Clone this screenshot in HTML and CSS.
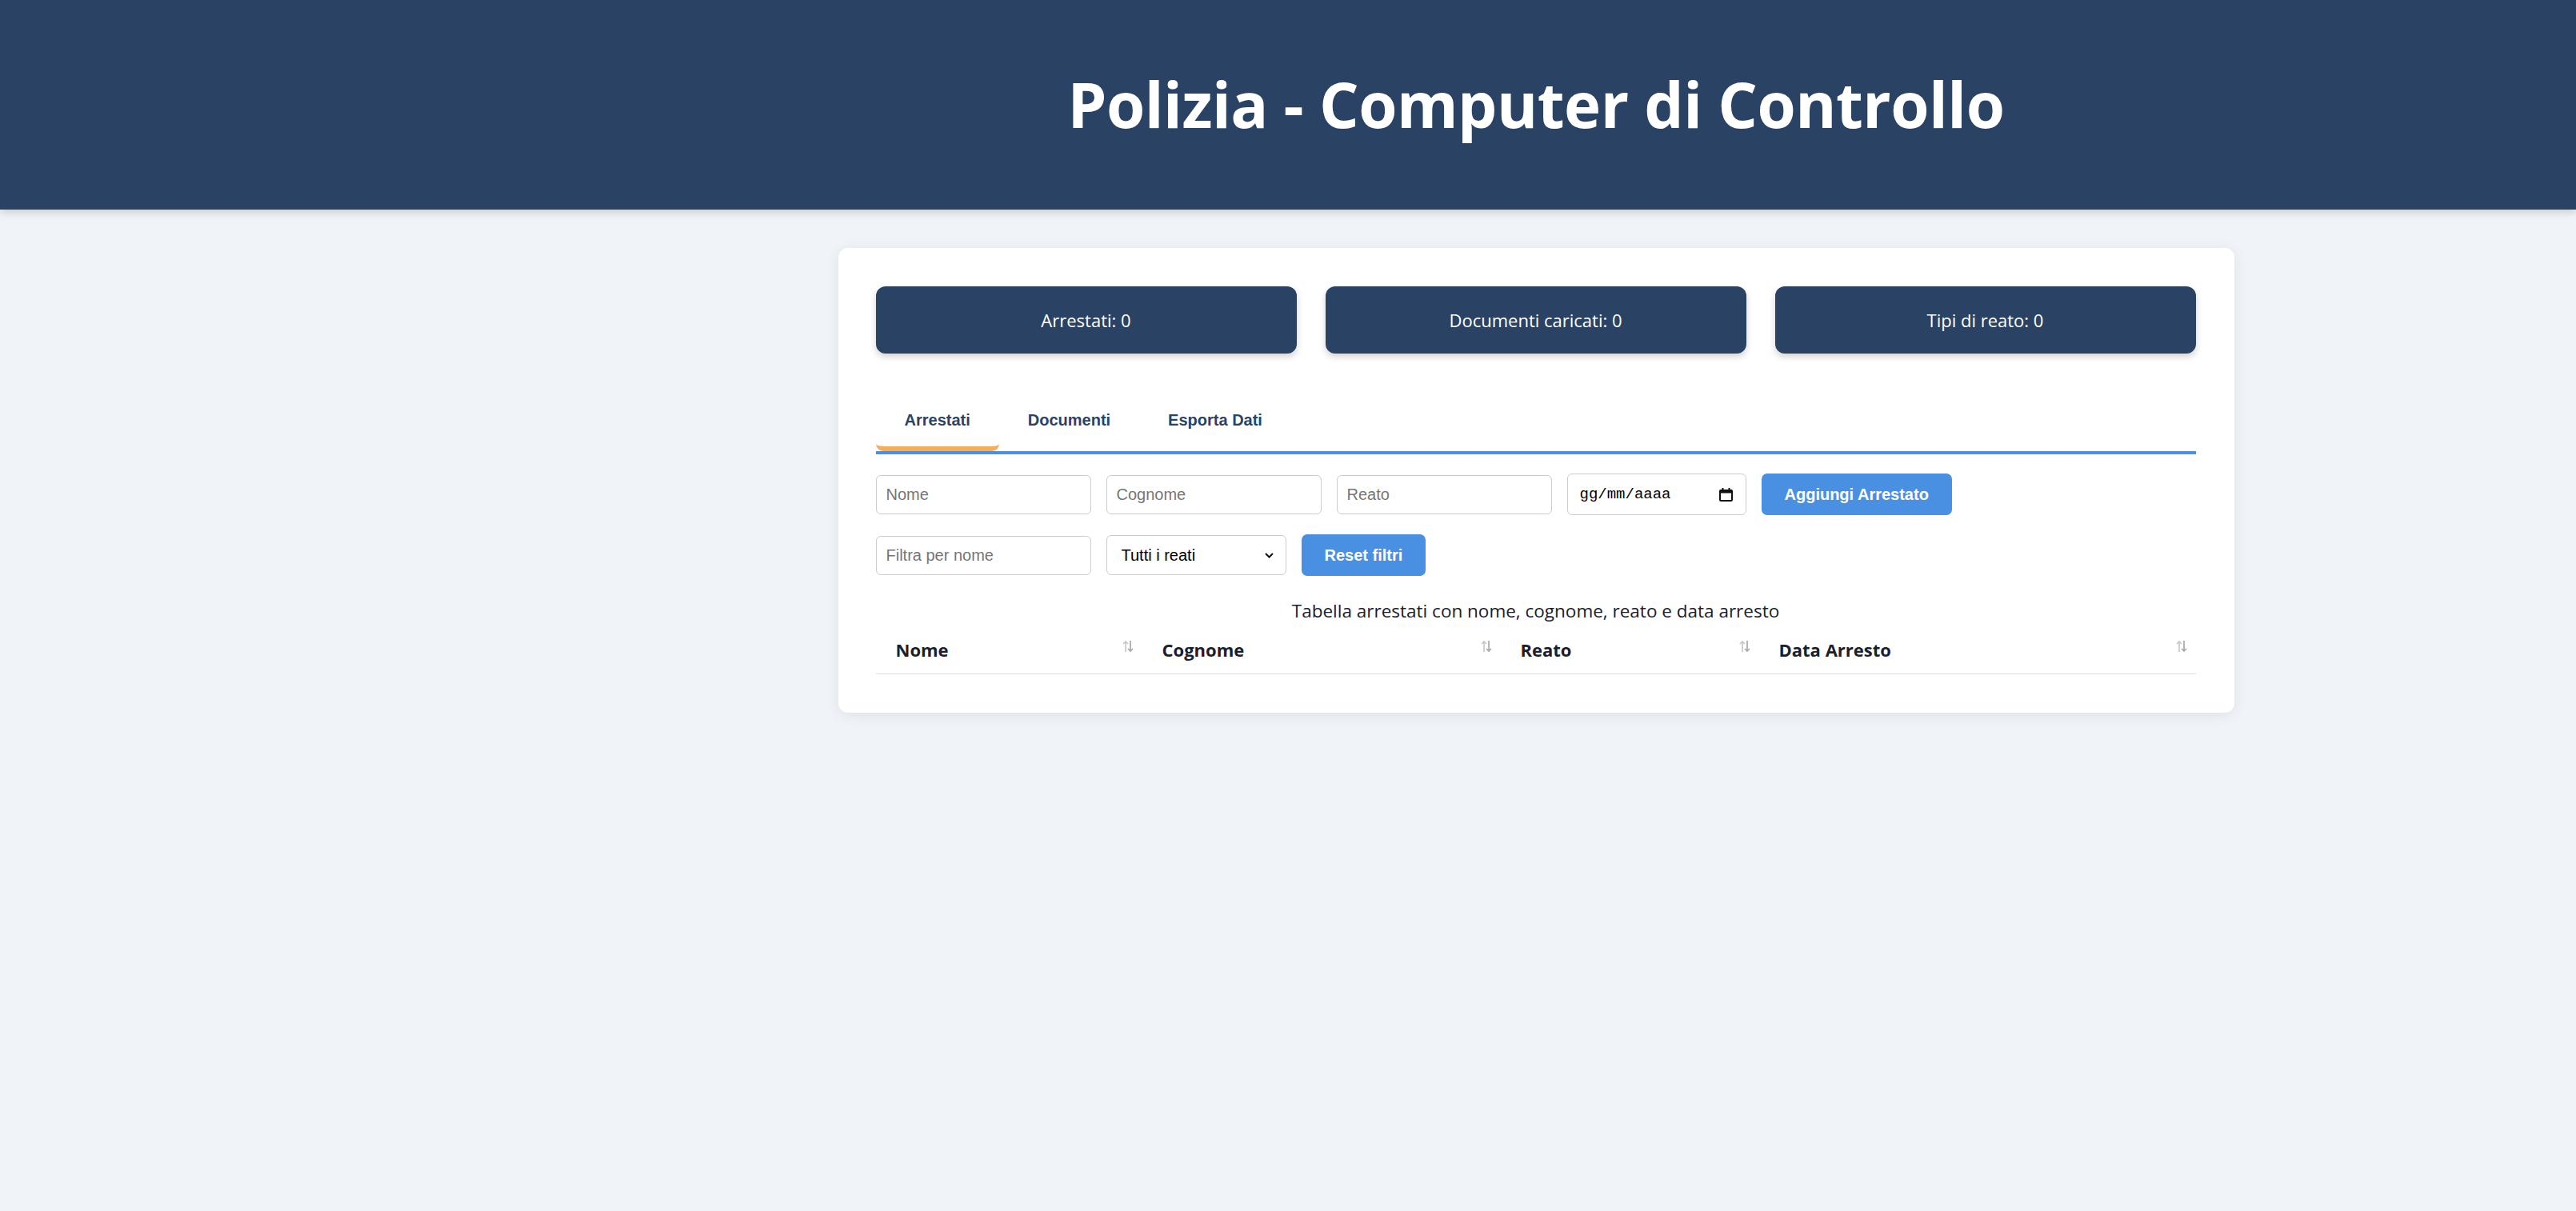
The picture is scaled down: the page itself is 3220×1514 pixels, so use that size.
FILE: index.html
```html
<!DOCTYPE html>
<html lang="it">
<head>
<meta charset="utf-8">
<title>Polizia - Computer di Controllo</title>
<link rel="stylesheet" href="styles.css">
</head>
<body>
<header class="site-header">
  <h1 class="site-title">Polizia - Computer di Controllo</h1>
</header>
<main class="main">
  <section class="card">
    <div class="stats">
      <div class="stat">Arrestati: 0</div>
      <div class="stat">Documenti caricati: 0</div>
      <div class="stat">Tipi di reato: 0</div>
    </div>

    <nav class="tabs">
      <button class="tab active" type="button">Arrestati</button>
      <button class="tab" type="button">Documenti</button>
      <button class="tab" type="button">Esporta Dati</button>
    </nav>

    <div class="form-row first">
      <input class="field" type="text" placeholder="Nome">
      <input class="field" type="text" placeholder="Cognome">
      <input class="field" type="text" placeholder="Reato">
      <div class="date-field">
        <span class="date-text">gg/mm/aaaa</span>
        <svg class="cal-icon" width="17" height="18" viewBox="0 0 17 18" aria-hidden="true">
          <rect x="1" y="4" width="15" height="13" rx="1" fill="none" stroke="#111" stroke-width="2"/>
          <rect x="1" y="3.5" width="15" height="4" fill="#111"/>
          <rect x="3.5" y="1" width="2" height="3" fill="#111"/>
          <rect x="11.5" y="1" width="2" height="3" fill="#111"/>
        </svg>
      </div>
      <button class="btn" type="button">Aggiungi Arrestato</button>
    </div>

    <div class="form-row">
      <input class="field" type="text" placeholder="Filtra per nome">
      <div class="select-wrap">
        <select class="select">
          <option>Tutti i reati</option>
        </select>
        <svg class="chevron" width="11" height="7" viewBox="0 0 11 7" aria-hidden="true">
          <path d="M1 1l4.5 4.5L10 1" fill="none" stroke="#111" stroke-width="2"/>
        </svg>
      </div>
      <button class="btn" type="button">Reset filtri</button>
    </div>

    <table class="table">
      <caption class="table-caption">Tabella arrestati con nome, cognome, reato e data arresto</caption>
      <thead>
        <tr>
          <th class="col-nome">Nome<svg class="sort" width="14" height="16" viewBox="0 0 14 16" aria-hidden="true"><path d="M4 15V2M1 5l3-3 3 3" fill="none" stroke="#c8c8c8" stroke-width="1.7"/><path d="M10 1v13M7 11l3 3 3-3" fill="none" stroke="#a9a9a9" stroke-width="1.7"/></svg></th>
          <th class="col-cognome">Cognome<svg class="sort" width="14" height="16" viewBox="0 0 14 16" aria-hidden="true"><path d="M4 15V2M1 5l3-3 3 3" fill="none" stroke="#c8c8c8" stroke-width="1.7"/><path d="M10 1v13M7 11l3 3 3-3" fill="none" stroke="#a9a9a9" stroke-width="1.7"/></svg></th>
          <th class="col-reato">Reato<svg class="sort" width="14" height="16" viewBox="0 0 14 16" aria-hidden="true"><path d="M4 15V2M1 5l3-3 3 3" fill="none" stroke="#c8c8c8" stroke-width="1.7"/><path d="M10 1v13M7 11l3 3 3-3" fill="none" stroke="#a9a9a9" stroke-width="1.7"/></svg></th>
          <th class="col-data">Data Arresto<svg class="sort" width="14" height="16" viewBox="0 0 14 16" aria-hidden="true"><path d="M4 15V2M1 5l3-3 3 3" fill="none" stroke="#c8c8c8" stroke-width="1.7"/><path d="M10 1v13M7 11l3 3 3-3" fill="none" stroke="#a9a9a9" stroke-width="1.7"/></svg></th>
        </tr>
      </thead>
      <tbody></tbody>
    </table>
  </section>
</main>
</body>
</html>
```

FILE: styles.css
```css
* { box-sizing: border-box; }

html, body {
  margin: 0;
  padding: 0;
}

body {
  background: #f0f4f8;
  font-family: "Open Sans", "Noto Sans", sans-serif;
  color: #1a202c;
  min-height: 1514px;
  overflow: hidden;
}

.site-header {
  background: #2a4365;
  height: 262px;
  display: flex;
  align-items: center;
  justify-content: center;
  padding-left: 620px;
  box-shadow: 0 3px 10px rgba(0, 0, 0, 0.18);
  position: relative;
  z-index: 1;
}

.site-title {
  margin: 0;
  color: #ffffff;
  font-family: "Open Sans", "Noto Sans", sans-serif;
  font-weight: 700;
  font-size: 78px;
  line-height: 1.2;
  letter-spacing: -0.5px;
}

.main {
  padding-left: 620px;
  padding-top: 48px;
}

.card {
  width: 1745px;
  margin: 0 auto;
  background: #ffffff;
  border-radius: 12px;
  padding: 48px 48px 48px 47px;
  box-shadow: 0 3px 18px rgba(0, 0, 0, 0.08);
}

.stats {
  display: grid;
  grid-template-columns: repeat(3, 1fr);
  gap: 36px;
  margin-bottom: 48px;
}

.stat {
  background: #2a4365;
  color: #ffffff;
  border-radius: 12px;
  padding: 24px;
  text-align: center;
  font-size: 22px;
  line-height: 36px;
  box-shadow: 0 4px 9px rgba(0, 0, 0, 0.18);
}

.tabs {
  display: flex;
  border-bottom: 4px solid #4a90e2;
}

.tab {
  background: none;
  border: none;
  border-bottom: 6px solid transparent;
  border-radius: 9px;
  padding: 24px 36px 21px;
  font-family: "Liberation Sans", Arial, sans-serif;
  font-weight: 700;
  font-size: 20px;
  line-height: 23px;
  color: #2a4365;
  cursor: pointer;
}

.tab.active {
  border-bottom-color: #f6ad55;
}

.form-row {
  display: flex;
  align-items: center;
  gap: 19px;
  margin-top: 24px;
}

.field {
  width: 269px;
  height: 49px;
  padding: 0 12px;
  border: 1px solid #cccccc;
  border-radius: 6px;
  font-family: "Liberation Sans", Arial, sans-serif;
  font-size: 20px;
  color: #111;
  background: #fff;
}

.field::placeholder {
  color: #767676;
}

.date-field {
  width: 224px;
  height: 52px;
  border: 1px solid #cccccc;
  border-radius: 6px;
  display: flex;
  align-items: center;
  justify-content: space-between;
  padding: 0 16px 0 15px;
  background: #fff;
}

.date-text {
  font-family: "Liberation Mono", "DejaVu Sans Mono", monospace;
  font-size: 19px;
  color: #000;
}

.cal-icon {
  display: block;
}

.btn {
  height: 52px;
  padding: 0 29px;
  border: none;
  border-radius: 7px;
  background: #4a90e2;
  color: #ffffff;
  font-family: "Liberation Sans", Arial, sans-serif;
  font-weight: 700;
  font-size: 20px;
  cursor: pointer;
}

.select-wrap {
  position: relative;
  width: 225px;
  height: 50px;
}

.select {
  width: 100%;
  height: 100%;
  appearance: none;
  -webkit-appearance: none;
  border: 1px solid #cccccc;
  border-radius: 6px;
  background: #fff;
  padding: 0 36px 0 18px;
  font-family: "Liberation Sans", Arial, sans-serif;
  font-size: 20px;
  color: #000;
}

.chevron {
  position: absolute;
  right: 16px;
  top: 22px;
  pointer-events: none;
}

.table {
  width: 100%;
  border-collapse: collapse;
  margin-top: 24px;
  table-layout: fixed;
}

.table-caption {
  caption-side: top;
  font-size: 22.5px;
  line-height: 36px;
  padding-top: 2px;
  color: #1a202c;
  text-align: center;
}

.table th {
  position: relative;
  text-align: left;
  font-weight: 700;
  font-size: 22px;
  line-height: 32px;
  padding: 14px 30px 14px 25px;
  border-bottom: 1px solid #dddddd;
  color: #1a202c;
}

.col-nome { width: 333px; }
.col-cognome { width: 448px; }
.col-reato { width: 323px; }
.col-data { width: 546px; }

.sort {
  position: absolute;
  right: 11px;
  top: 18px;
}
```
